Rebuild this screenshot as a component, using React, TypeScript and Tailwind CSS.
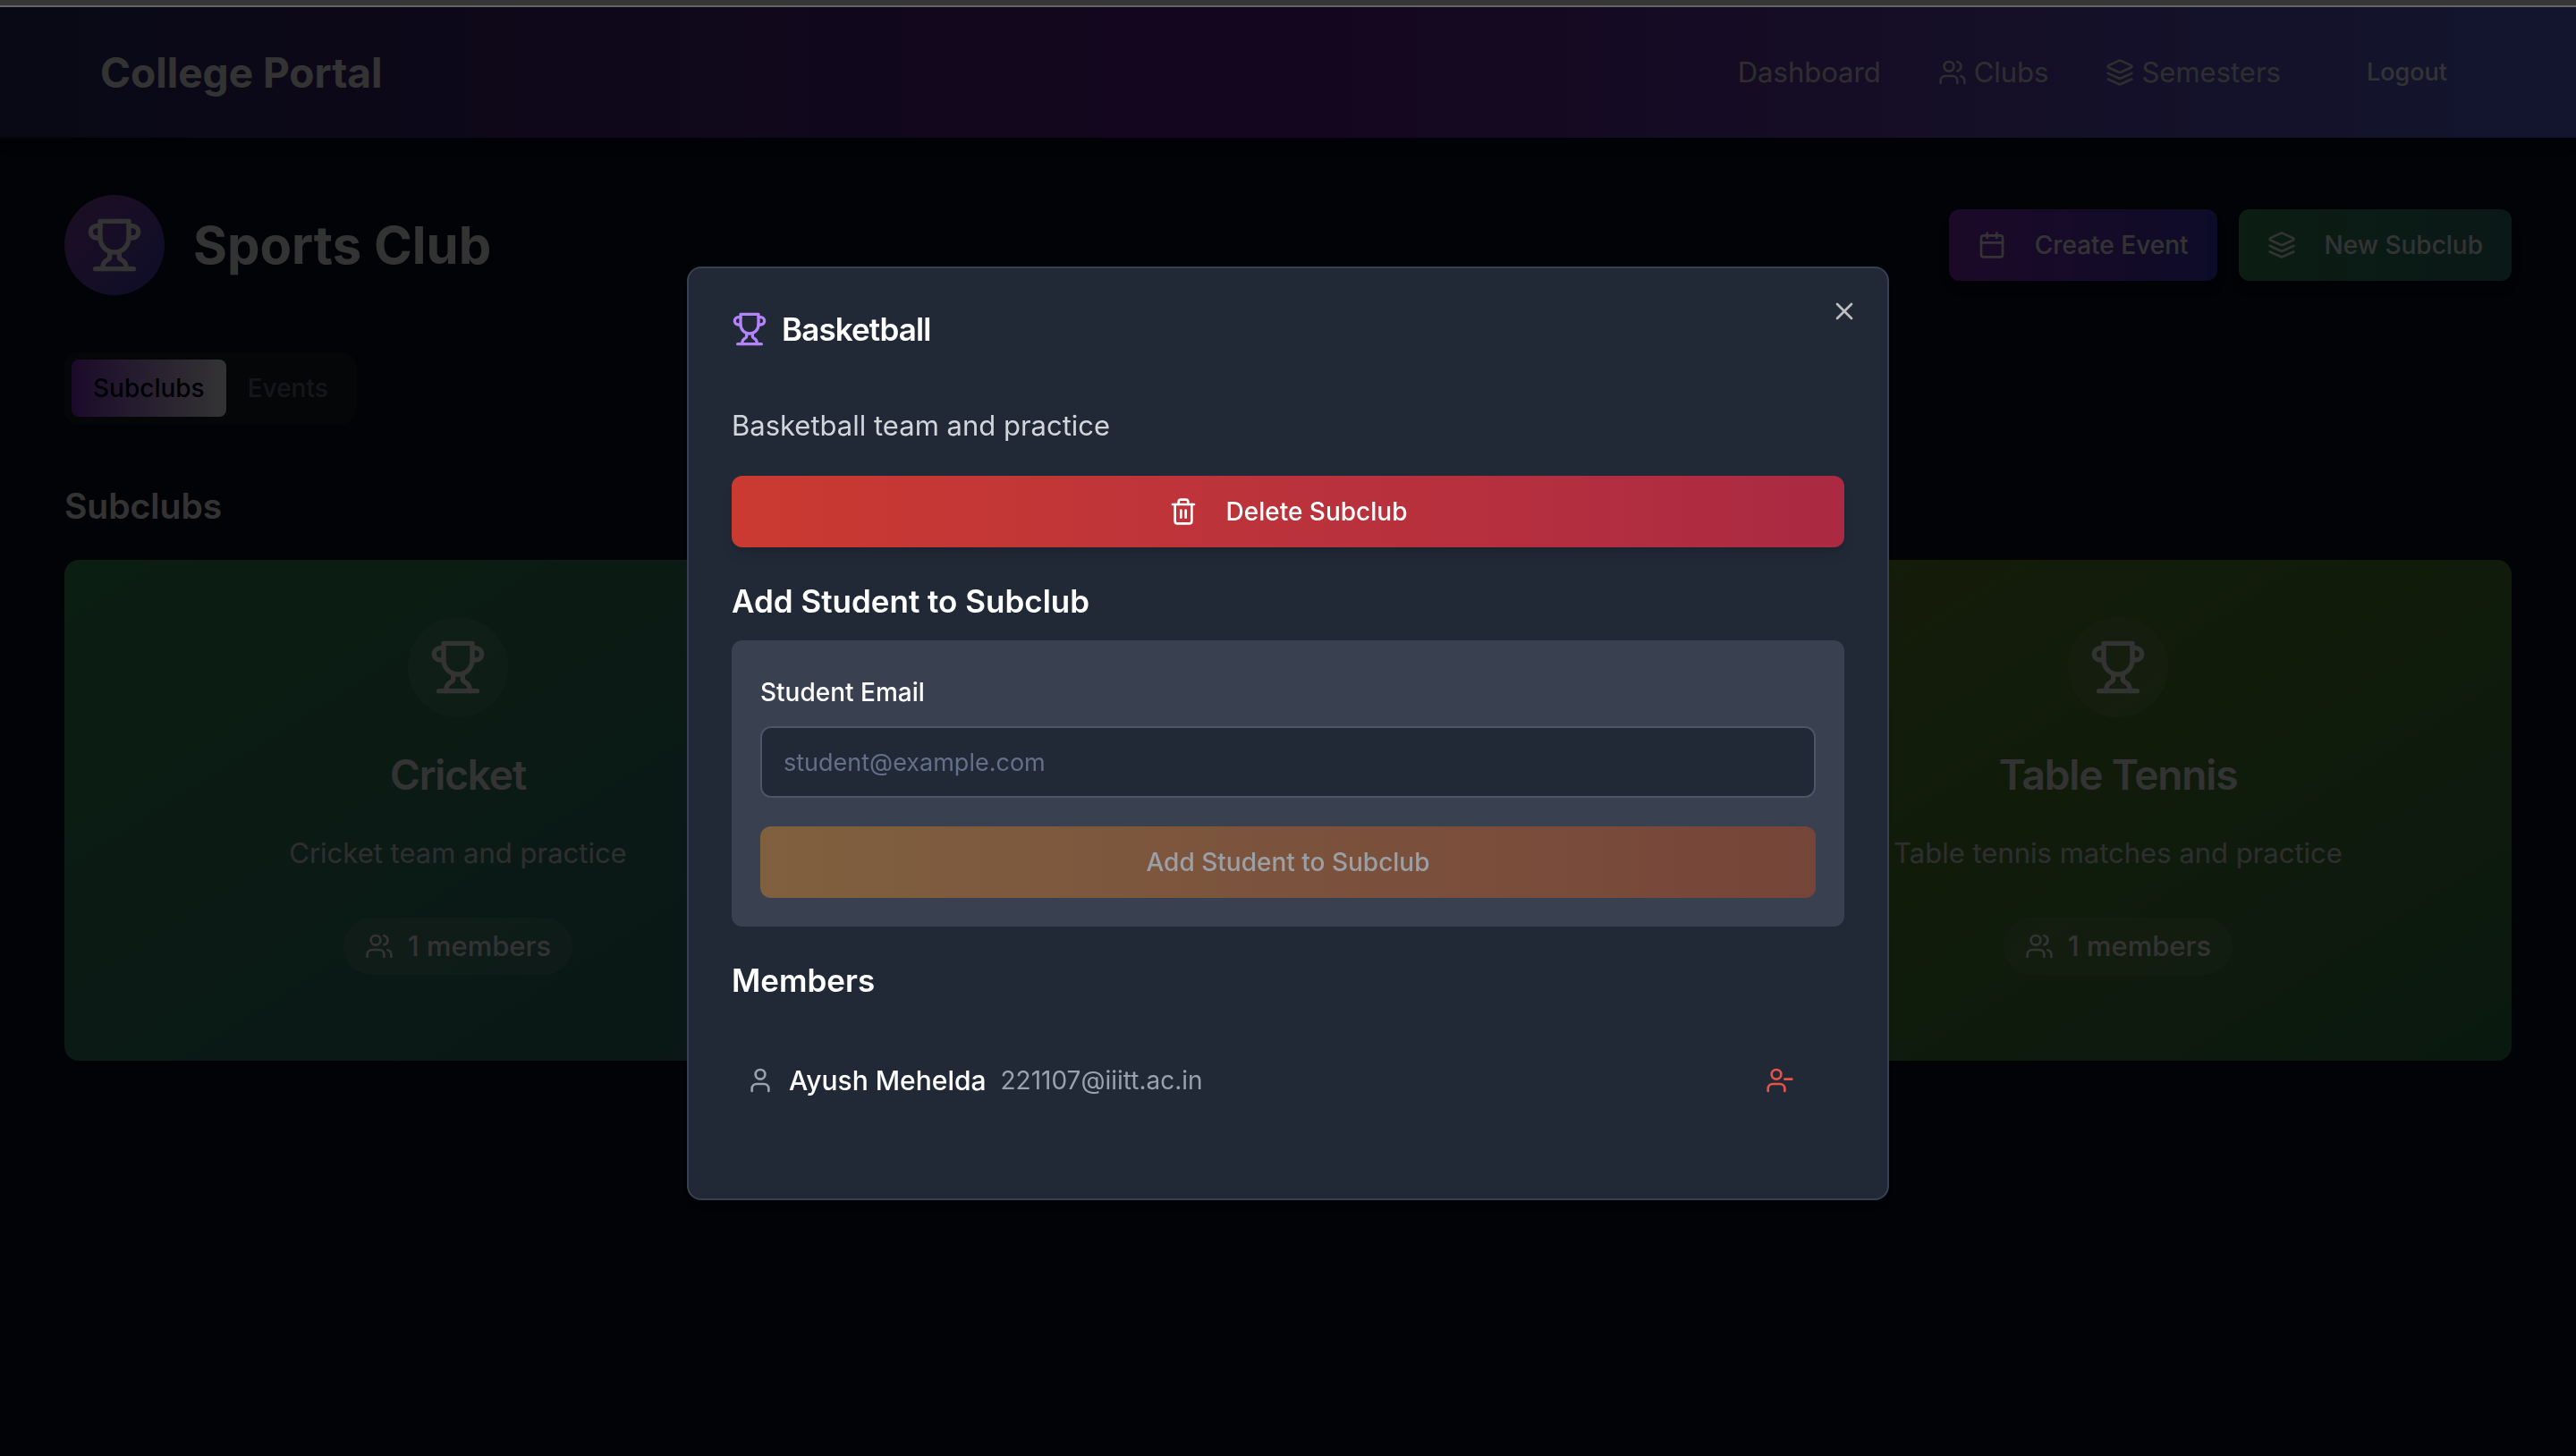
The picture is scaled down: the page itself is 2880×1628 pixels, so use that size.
import type { ReactNode } from "react";
import { Calendar, Trash2, User, UserMinus, Users, X } from "lucide-react";

function Trophy({ className }: { className: string }) {
  return (
    <svg
      viewBox="0 0 24 24"
      fill="none"
      stroke="currentColor"
      strokeWidth="2"
      strokeLinecap="round"
      strokeLinejoin="round"
      aria-hidden="true"
      className={className}
    >
      <path d="M6 9H4.5a2.5 2.5 0 0 1 0-5H6" />
      <path d="M18 9h1.5a2.5 2.5 0 0 0 0-5H18" />
      <path d="M4 22h16" />
      <path d="M10 14.66V17c0 .55-.47.98-.97 1.21C7.85 18.75 7 20.24 7 22" />
      <path d="M14 14.66V17c0 .55.47.98.97 1.21C16.15 18.75 17 20.24 17 22" />
      <path d="M18 2H6v7a6 6 0 0 0 12 0V2Z" />
    </svg>
  );
}

function Layers({ className }: { className: string }) {
  return (
    <svg
      viewBox="0 0 24 24"
      fill="none"
      stroke="currentColor"
      strokeWidth="2"
      strokeLinecap="round"
      strokeLinejoin="round"
      aria-hidden="true"
      className={className}
    >
      <path d="m12.83 2.18a2 2 0 0 0-1.66 0L2.6 6.08a1 1 0 0 0 0 1.83l8.58 3.91a2 2 0 0 0 1.66 0l8.58-3.9a1 1 0 0 0 0-1.83Z" />
      <path d="m22 17.65-9.17 4.16a2 2 0 0 1-1.66 0L2 17.65" />
      <path d="m22 12.65-9.17 4.16a2 2 0 0 1-1.66 0L2 12.65" />
    </svg>
  );
}

function NavLink({ icon, children }: { icon?: ReactNode; children: ReactNode }) {
  return (
    <a href="#" className="flex items-center gap-2 text-[31px] leading-[48px] text-gray-200">
      {icon}
      {children}
    </a>
  );
}

const openSubclub = "Basketball";

const subclubs = [
  {
    name: "Cricket",
    description: "Cricket team and practice",
    members: 1,
    tone: "from-[#3c965a] via-[#378269] to-[#327369]",
  },
  {
    name: "Basketball",
    description: "Basketball team and practice",
    members: 1,
    tone: "from-[#378269] to-[#327369]",
  },
  {
    name: "Table Tennis",
    description: "Table tennis matches and practice",
    members: 1,
    tone: "from-[#6e912d] via-[#508737] to-[#327d4b]",
  },
];

function SubclubCard({ name, description, members, tone }: (typeof subclubs)[number]) {
  return (
    <article className={`rounded-2xl bg-linear-to-br px-12 pt-16 pb-24 ${tone}`}>
      {/* The open subclub's details are shown by the dialog instead. */}
      <div className={`flex flex-col items-center ${name === openSubclub ? "invisible" : ""}`}>
        <div className="flex size-28 items-center justify-center rounded-full bg-white/10">
          <Trophy className="size-16" />
        </div>
        <h3 className="mt-8 text-[46px] leading-[64px] font-semibold tracking-tight">{name}</h3>
        <p className="mt-8 text-[31px] leading-[48px] text-gray-200">{description}</p>
        <div className="mt-12 flex h-16 items-center gap-4 rounded-full bg-white/10 px-6 text-[31px] font-medium">
          <Users className="size-8" />
          <span>{members} members</span>
        </div>
      </div>
    </article>
  );
}

function SubclubDialog() {
  return (
    <div
      role="dialog"
      aria-modal="true"
      aria-labelledby="dialog-title"
      className="relative w-full max-w-[1344px] rounded-2xl border-2 border-gray-700 bg-[#212936] p-12 text-white shadow-lg"
    >
      <button type="button" aria-label="Close" className="absolute top-8 right-8 opacity-70">
        <X className="size-8" />
      </button>
      <h2 id="dialog-title" className="flex h-10 items-center gap-4 text-[35px] font-semibold tracking-tight">
        <Trophy className="size-10 text-[#b583fa]" />
        {openSubclub}
      </h2>
      <p className="mt-16 text-[31px] leading-[48px] text-gray-300">Basketball team and practice</p>
      <button
        type="button"
        className="mt-8 flex h-20 w-full items-center justify-center gap-8 rounded-xl bg-linear-to-r from-[#cb3a31] to-[#ab2a42] text-[28px] font-medium shadow-lg"
      >
        <Trash2 className="size-8" />
        Delete Subclub
      </button>
      <h3 className="mt-8 text-[35px] leading-[56px] font-semibold">Add Student to Subclub</h3>
      <form className="mt-4 rounded-xl bg-[#394150] p-8">
        <label htmlFor="student-email" className="block text-[28px] leading-[52px] font-medium">
          Student Email
        </label>
        <input
          id="student-email"
          type="email"
          placeholder="student@example.com"
          className="mt-3 h-20 w-full rounded-xl border-2 border-gray-600 bg-[#212936] px-6 text-[27px] placeholder:text-[#64708a]"
        />
        <button
          type="button"
          disabled
          className="mt-8 flex h-20 w-full items-center justify-center rounded-xl bg-linear-to-r from-[#80603f] to-[#764539] text-[28px] font-medium text-[#9ba0a7]"
        >
          Add Student to Subclub
        </button>
      </form>
      <h3 className="mt-8 text-[35px] leading-[56px] font-semibold">Members</h3>
      <ul className="my-8">
        <li className="flex items-center justify-between p-4">
          <div className="flex items-center gap-4">
            <User className="size-8 text-gray-400" />
            <span className="text-[30px] font-medium">Ayush Mehelda</span>
            <span className="text-[28px] text-gray-400">221107@iiitt.ac.in</span>
          </div>
          <button
            type="button"
            aria-label="Remove Ayush Mehelda"
            className="flex h-[72px] items-center pr-10 pl-6 text-[#e5534b]"
          >
            <UserMinus className="size-8" />
          </button>
        </li>
      </ul>
    </div>
  );
}

export default function App() {
  return (
    <div className="min-h-screen bg-[#0a0f1e] font-['Inter',sans-serif] text-white">
      <div className="relative z-20 h-2 border-b-2 border-[#646464] bg-[#363636]" />
      <header className="flex items-center justify-between bg-linear-to-r from-[#2d2d6e] via-[#691e9b] to-[#5f69e6] px-28 py-8 shadow-lg">
        <a href="#" className="text-[46px] font-bold">
          College Portal
        </a>
        <nav className="flex h-[82px] items-center gap-16">
          <NavLink>Dashboard</NavLink>
          <NavLink icon={<Users className="size-8" />}>Clubs</NavLink>
          <NavLink icon={<Layers className="size-8" />}>Semesters</NavLink>
          <button type="button" className="px-8 text-[27px] font-medium">
            Logout
          </button>
        </nav>
      </header>

      <main className="px-[72px] py-16">
        <div className="flex items-center justify-between">
          <div className="flex items-center gap-8">
            <div className="flex size-28 items-center justify-center rounded-full bg-linear-to-br from-[#9146af] to-[#4641c8]">
              <Trophy className="size-16" />
            </div>
            <h1 className="text-[58px] font-bold">Sports Club</h1>
          </div>
          <div className="flex gap-6">
            <button
              type="button"
              className="flex h-20 items-center gap-8 rounded-xl bg-linear-to-r from-[#8c2dc8] to-[#413cc8] px-8 text-[28px] font-medium shadow-lg"
            >
              <Calendar className="size-8" />
              Create Event
            </button>
            <button
              type="button"
              className="flex h-20 items-center gap-8 rounded-xl bg-linear-to-r from-[#3c915f] to-[#327873] px-8 text-[28px] font-medium shadow-lg"
            >
              <Layers className="size-8" />
              New Subclub
            </button>
          </div>
        </div>

        <div role="tablist" className="mt-16 inline-flex h-20 rounded-2xl bg-[#191e28] p-2 text-[28px] font-medium">
          <button
            type="button"
            role="tab"
            aria-selected="true"
            className="rounded-lg bg-linear-to-r from-[#8c2dd2] to-white px-6 text-slate-950"
          >
            Subclubs
          </button>
          <button type="button" role="tab" aria-selected="false" className="px-6 text-[#69707f]">
            Events
          </button>
        </div>

        <h2 className="mt-16 text-[39px] leading-[56px] font-semibold">Subclubs</h2>
        <section className="mt-8 grid grid-cols-3 gap-12">
          {subclubs.map((club) => (
            <SubclubCard key={club.name} {...club} />
          ))}
        </section>
      </main>

      <div className="fixed inset-0 top-2 z-10 flex items-center justify-center bg-black/80 pt-1">
        <SubclubDialog />
      </div>
    </div>
  );
}
